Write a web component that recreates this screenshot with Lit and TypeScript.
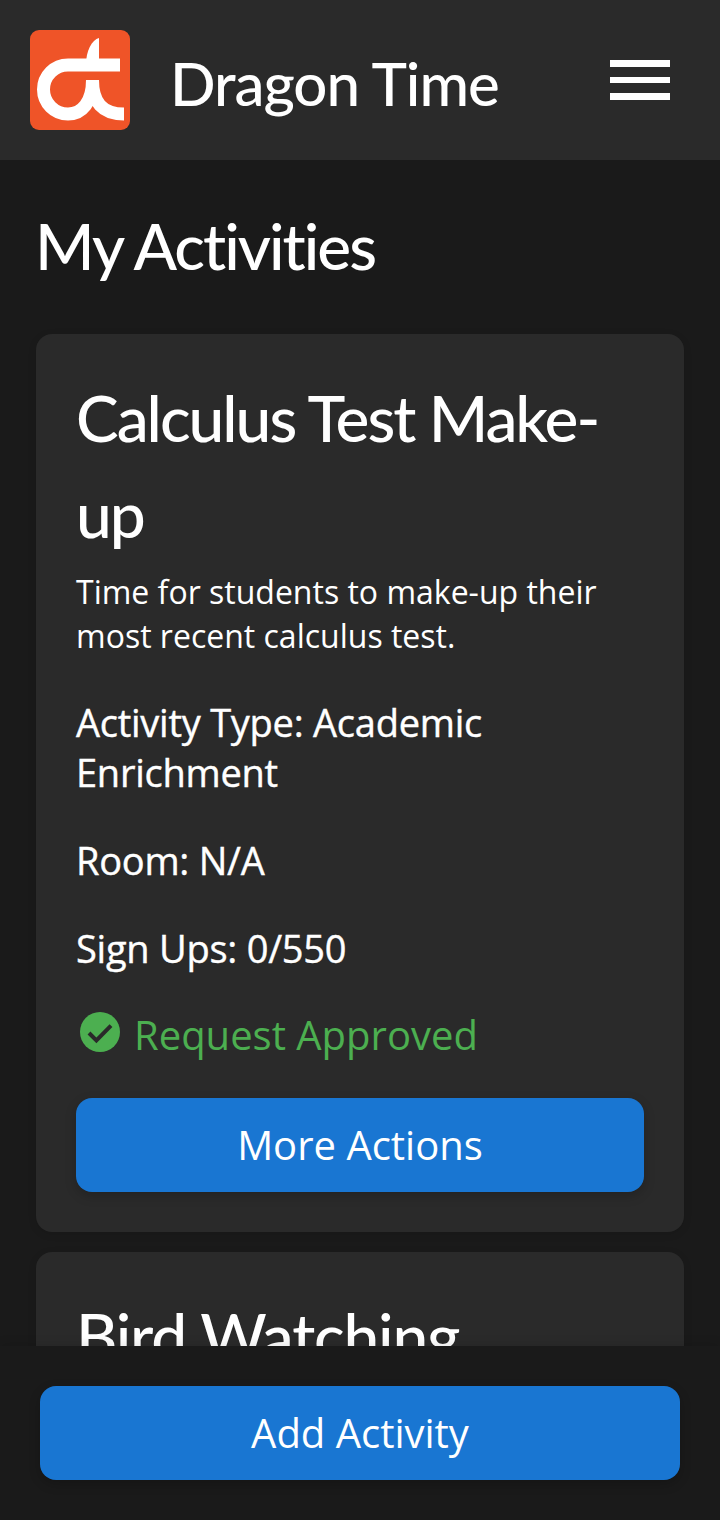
import { LitElement, html, css } from "lit";
import { customElement } from "lit/decorators.js";

@customElement("app-root")
export class AppRoot extends LitElement {
  static styles = css`
    :host { display: flex; flex-direction: column; width: 720px; height: 1520px; background: #1a1a1a; color: #fff; font-family: "Open Sans", sans-serif; overflow: hidden; }
    * { box-sizing: border-box; }
    header { height: 160px; flex: none; background: #2a2a2a; display: flex; align-items: center; padding: 0 50px 0 30px; }
    .logo { width: 100px; height: 100px; flex: none; display: block; }
    .brand { font-family: "Lato", sans-serif; font-size: 60px; font-weight: 500; margin: 6px 0 0 40px; flex: 1; letter-spacing: -1px; }
    .menu { width: 60px; display: flex; flex-direction: column; gap: 10px; }
    .menu i { display: block; height: 6.67px; background: #fff; }
    main { flex: 1; min-height: 0; overflow: hidden; padding: 0 36px; }
    h1 { font-family: "Lato", sans-serif; font-size: 64px; font-weight: 500; line-height: 96px; margin: 38px 0 40px -1px; letter-spacing: -2px; }
    .card { background: #2a2a2a; border-radius: 16px; padding: 40px; margin-bottom: 20px; box-shadow: 0 2px 8px rgba(0,0,0,.1); }
    .next { min-height: 300px; }
    h2 { font-family: "Lato", sans-serif; font-size: 64px; font-weight: 500; line-height: 96px; margin: -4px 0 8px; letter-spacing: -2px; }
    .next h2 { letter-spacing: -1.2px; }
    .desc { font-size: 32px; line-height: 44px; margin: 0 0 39px; }
    .meta { font-size: 38px; line-height: 50px; margin: 0 0 38px; letter-spacing: -0.25px; -webkit-text-stroke: 0.4px #fff; }
    .status { display: flex; align-items: center; color: #4caf50; font-size: 40px; line-height: 48px; gap: 10px; margin-bottom: 39px; }
    .status svg { width: 48px; height: 48px; flex: none; margin-top: -6px; }
    button { display: block; width: 100%; height: 94px; border: 0; border-radius: 16px; background: #1976d2; color: #fff; font-family: "Open Sans", sans-serif; font-size: 40px; line-height: 92px; box-shadow: 0 4px 12px rgba(0,0,0,.2); padding: 0 0 1px; }
    footer { height: 174px; flex: none; background: #1a1a1a; padding: 40px; box-shadow: 0 -2px 10px rgba(0,0,0,.1); position: relative; }
  `;

  render() {
    return html`
      <header>
        <svg class="logo" viewBox="0 0 100 100">
          <rect width="100" height="100" rx="9" fill="#ef5428" />
          <path fill="none" stroke="#fff" stroke-width="13" d="M90 35H38A24.500 24.500 0 0 0 38 84C52 84 62.500 72 62.500 50M62.500 50C62.500 72 72 84 94 84" />
          <path fill="#fff" d="M56 35C56 20 62 10 69 8V40H56Z" />
        </svg>
        <div class="brand">Dragon Time</div>
        <div class="menu"><i></i><i></i><i></i></div>
      </header>
      <main>
        <h1>My Activities</h1>
        <section class="card">
          <h2>Calculus Test Make-up</h2>
          <p class="desc">Time for students to make-up their most recent calculus test.</p>
          <p class="meta">Activity Type: Academic Enrichment</p>
          <p class="meta">Room: N/A</p>
          <p class="meta">Sign Ups: 0/550</p>
          <div class="status">
            <svg viewBox="0 0 24 24"><path fill="#4caf50" d="M12 2a10 10 0 1 0 0 20 10 10 0 0 0 0-20Z"/><path fill="none" stroke="#2a2a2a" stroke-width="2" d="M6.500 12.500l3.700 3.700 7.300-7.400"/></svg>
            Request Approved
          </div>
          <button>More Actions</button>
        </section>
        <section class="card next">
          <h2>Bird Watching</h2>
        </section>
      </main>
      <footer><button>Add Activity</button></footer>
    `;
  }
}
